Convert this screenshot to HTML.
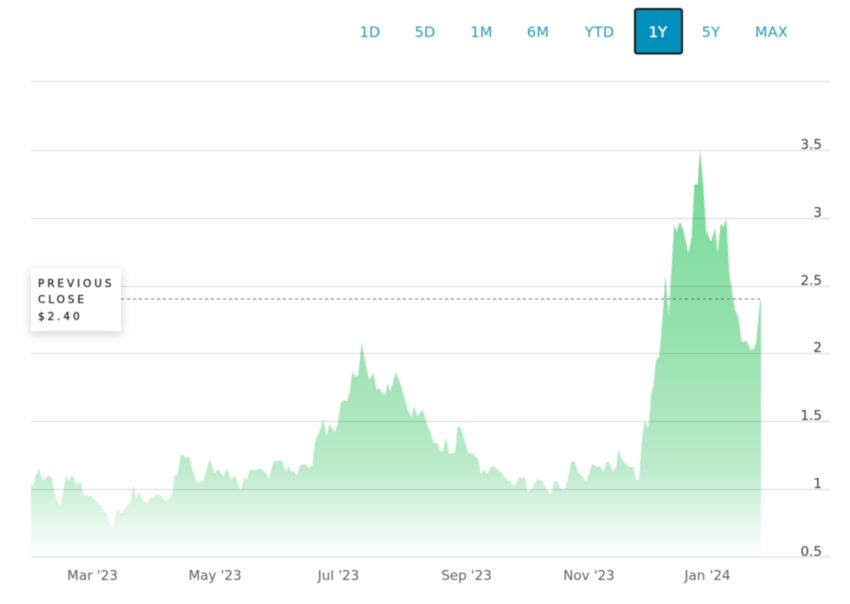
<!DOCTYPE html>
<html>
<head>
<meta charset="utf-8">
<style>
html,body{margin:0;padding:0;background:#fff;width:850px;height:604px;overflow:hidden}
svg{display:block;filter:blur(.45px)}
text{font-family:"DejaVu Sans","Liberation Sans",sans-serif}
.b{font-size:14.5px;fill:#1f9ac4;text-anchor:middle;letter-spacing:.2px}
.x{font-size:13.5px;fill:#5f5f5f;text-anchor:middle}
.y{font-size:13.5px;fill:#3a3a3a;text-anchor:end}
.t{font-size:10.5px;fill:#222;letter-spacing:2.9px;stroke:#222;stroke-width:.25px}
</style>
</head>
<body>
<svg width="850" height="604" viewBox="0 0 850 604" xmlns="http://www.w3.org/2000/svg">
<defs>
<linearGradient id="g" gradientUnits="userSpaceOnUse" x1="0" y1="150" x2="0" y2="557">
<stop offset="0" stop-color="#72d994"/>
<stop offset=".5" stop-color="#9ae3b1"/>
<stop offset=".78" stop-color="#bcebcb"/>
<stop offset=".9" stop-color="#e0f6e7"/>
<stop offset="1" stop-color="#ffffff"/>
</linearGradient>
<filter id="s" x="-30%" y="-30%" width="160%" height="170%">
<feDropShadow dx="0" dy="3" stdDeviation="5" flood-color="#000" flood-opacity=".18"/>
</filter>
</defs>

<path fill="url(#g)" d="M31,557 L31,482 L32.7,487 L36,475 L39.3,469 L42,480 L45,479 L48.3,475.3 L51.7,478 L54.3,491.7 L57.3,501.7 L60.7,505 L66,475 L68.3,480.7 L72.3,475 L76.7,485 L81,481.7 L83.3,495 L90.7,495.7 L95,500 L98.3,504 L101.5,505 L103.3,511 L107.3,513.3 L110.7,527.3 L112.7,527.3 L117.3,509.3 L121.3,513.3 L126.7,506.7 L131,500 L133.7,484.3 L136.3,500 L139,491.7 L143.3,500.7 L147.7,502.7 L151,496.7 L153.3,498 L156.7,493.3 L161.7,496.7 L166,500.7 L170,498.3 L172.7,491.7 L174.3,475.7 L177.3,475 L180.7,455 L183.3,454.7 L186,458.3 L189,455.7 L192.3,470 L196.7,482.7 L203.3,480.7 L209.7,459.3 L214.3,473.3 L218.3,469 L223.3,476.7 L227.3,468.3 L230.7,480 L235,475 L240.7,490.7 L244,477.3 L246.7,480 L250,469 L255,470.7 L259.3,468.3 L265,471.7 L269,479 L273.3,461.7 L281.7,460 L285.7,471.7 L288.3,466 L291,471.7 L294,471 L296.7,475.7 L300,465 L305,464 L309.3,467.7 L312.3,465 L315,441.7 L320,430 L323.3,419.3 L326.7,436 L329.3,424.3 L334.7,432.3 L338,423.3 L340.7,402.7 L344,400 L347.3,401 L350,390 L352.3,371.7 L355,376.7 L358.3,375 L361.7,341.7 L365,361.7 L369.3,380 L373.3,373.3 L376.7,390 L379,388.3 L383.3,394 L385.7,394 L387.3,382.3 L390,391.7 L396,371.7 L401.7,388.3 L408.3,411.7 L411.7,416.7 L414,406 L417.3,416 L422.7,410 L426.7,423.3 L434.3,443.3 L437.7,443.3 L440.7,451.7 L443.3,450.7 L446,436.7 L449,454 L455,452.7 L457.7,426 L460.7,428.3 L468.3,453.3 L472.7,453.3 L478.3,460 L480.7,474.3 L484,469 L486.7,475 L491,466.7 L493.3,466 L501.7,472.7 L506.7,480 L510,480.7 L513.3,486 L516,484 L519.3,476.7 L521.7,479 L525,476.7 L527.7,491.7 L531.7,489.3 L536.7,479.3 L541.7,481 L546,488.3 L550.7,495.3 L554.3,480.7 L557.3,481.3 L561,489.3 L565,488.3 L567.3,481.7 L571.7,460.7 L575,462.3 L578.3,473.3 L581.7,475 L586,481.7 L592.3,464 L596.7,466.7 L600,465.7 L603.3,471.7 L606.7,461.7 L609.3,461.7 L612.7,471.7 L616,467.3 L618.7,449 L621.7,459.3 L628.3,466.7 L633.3,467.3 L636,479.3 L639,480 L641.7,443.3 L644.3,421.7 L645.6,421.7 L647.7,428.3 L649.3,420 L651,395 L653.5,385 L656,360 L659.3,356.7 L663.3,306.7 L665.3,275 L668.7,315 L671.7,266.7 L674,225 L676.7,231.7 L680,221.7 L683.3,230 L688.3,253.3 L691.7,236.7 L694.3,184.3 L697.7,184.3 L700,150 L703.3,186.7 L706,230 L711,241.7 L715,228.3 L717.7,253.3 L720.7,223.3 L723.3,227.3 L726.3,219.3 L729.3,273.3 L735,310 L738.3,316.7 L741.7,341.7 L746.7,341 L750.7,350 L753.3,349.3 L756,343.3 L760,301.7 L761,300 L761,557 Z"/>

<g stroke="#000" stroke-opacity=".15" stroke-width="1" shape-rendering="crispEdges">
<line x1="31" x2="830" y1="81.5" y2="81.5"/>
<line x1="31" x2="830" y1="150.5" y2="150.5"/>
<line x1="31" x2="830" y1="218.5" y2="218.5"/>
<line x1="31" x2="830" y1="286.5" y2="286.5"/>
<line x1="31" x2="830" y1="353.5" y2="353.5"/>
<line x1="31" x2="830" y1="421.5" y2="421.5"/>
<line x1="31" x2="830" y1="489.5" y2="489.5"/>
<line x1="31" x2="830" y1="557" y2="557"/>
</g>

<line x1="121" x2="761" y1="299" y2="299" stroke="#777" stroke-width="1" stroke-dasharray="3 3"/>

<rect x="31" y="268" width="90" height="63" fill="#fff" filter="url(#s)"/>
<text class="t" x="38" y="287">PREVIOUS</text>
<text class="t" x="38" y="303">CLOSE</text>
<text class="t" x="38" y="320">$2.40</text>

<text class="b" x="370" y="37">1D</text>
<text class="b" x="425" y="37">5D</text>
<text class="b" x="481.500" y="37">1M</text>
<text class="b" x="538" y="37">6M</text>
<text class="b" x="599.500" y="37">YTD</text>
<rect x="635" y="9" width="47" height="44.500" rx="2" fill="#0090bb" stroke="#1a1a1a" stroke-width="2"/>
<text class="b" x="658" y="37" style="fill:#fff;stroke:#fff;stroke-width:.45px">1Y</text>
<text class="b" x="711" y="37">5Y</text>
<text class="b" x="771.500" y="37">MAX</text>

<text class="y" x="822" y="149">3.5</text>
<text class="y" x="822" y="217">3</text>
<text class="y" x="822" y="285">2.5</text>
<text class="y" x="822" y="352">2</text>
<text class="y" x="822" y="420">1.5</text>
<text class="y" x="822" y="488">1</text>
<text class="y" x="822" y="556">0.5</text>

<text class="x" x="92.500" y="580">Mar '23</text>
<text class="x" x="215" y="580">May '23</text>
<text class="x" x="338.500" y="580">Jul '23</text>
<text class="x" x="466.500" y="580">Sep '23</text>
<text class="x" x="589" y="580">Nov '23</text>
<text class="x" x="707.500" y="580">Jan '24</text>
</svg>
</body>
</html>
